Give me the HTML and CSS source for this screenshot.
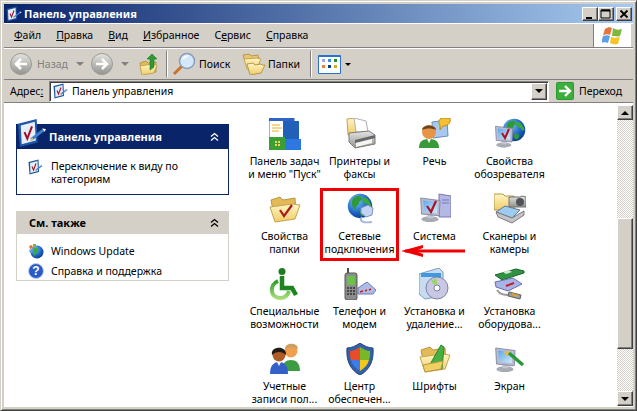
FILE: index.html
```html
<!DOCTYPE html>
<html lang="ru">
<head>
<meta charset="utf-8">
<title>Панель управления</title>
<link rel="stylesheet" href="styles.css">
</head>
<body>
<svg class="defs" width="0" height="0" aria-hidden="true">
  <defs>
    <linearGradient id="gFolder" x1="0" y1="0" x2="0" y2="1"><stop offset="0" stop-color="#fff6c4"/><stop offset="1" stop-color="#f0cc68"/></linearGradient>
    <linearGradient id="gGrey" x1="0" y1="0" x2="0" y2="1"><stop offset="0" stop-color="#e4e4e0"/><stop offset="1" stop-color="#93938f"/></linearGradient>
    <linearGradient id="gScreen" x1="0" y1="0" x2="1" y2="1"><stop offset="0" stop-color="#5aa8ec"/><stop offset="1" stop-color="#d6ecfb"/></linearGradient>
    <linearGradient id="gGreen" x1="0" y1="0" x2="0" y2="1"><stop offset="0" stop-color="#2f9c2c"/><stop offset="1" stop-color="#a4dc74"/></linearGradient>
    <radialGradient id="gGlobe" cx=".35" cy=".3" r=".8"><stop offset="0" stop-color="#7cc4f4"/><stop offset=".6" stop-color="#1c64c4"/><stop offset="1" stop-color="#0a3484"/></radialGradient>
    <symbol id="cp" viewBox="0 0 32 32">
      <polygon points="1,6 21,1 22,26 3,31" fill="#1f57a8"/>
      <polygon points="4,8 19,4 20,24 5,28" fill="#e6eef8"/>
      <path d="M8 15l3 7 5-13" fill="none" stroke="#a11226" stroke-width="2.200"/>
      <path d="M15 23L28 13" stroke="#3f7fd0" stroke-width="3"/>
      <path d="M13 25l3-4 2 2z" fill="#e8c860"/>
      <path d="M27 11l4 1-2 3z" fill="#f0f4fa"/>
    </symbol>
    <symbol id="globe" viewBox="0 0 32 32">
      <circle cx="16" cy="16" r="15" fill="url(#gGlobe)"/>
      <path d="M8 6c4-3 9-3 10 0s-3 3-3 6-4 3-4 7-3 1-4-2-2-8 1-11z" fill="#2f9a3c"/>
      <path d="M21 5c4 1 8 6 9 11-2 2-4 0-5-2s-5-1-6-4 0-4 2-5z" fill="#3aa844"/>
      <path d="M17 21c3-1 6 0 6 3s-3 5-5 4-3-5-1-7z" fill="#2f9a3c"/>
    </symbol>
    <symbol id="folder" viewBox="0 0 32 32">
      <path d="M2 7l9-3 3 3 12-2 1 17-21 6z" fill="#e2bb58" stroke="#b8964a"/>
      <path d="M1 14l23-3 7 1-5 14-20 3z" fill="url(#gFolder)" stroke="#c4a450"/>
    </symbol>
    <symbol id="monitor" viewBox="0 0 32 32">
      <ellipse cx="13" cy="28" rx="10" ry="3.500" fill="#a8aab4"/>
      <path d="M10 22h7v5h-7z" fill="#c4c6d0"/>
      <polygon points="2,3 25,6 24,24 3,22" fill="#b8bcd0" stroke="#7c80a0"/>
      <polygon points="5,6 22,8 21,21 6,19" fill="url(#gScreen)"/>
    </symbol>
  </defs>
</svg>
<div class="window">
  <header class="titlebar">
    <svg class="i16"><use href="#cp"/></svg>
    <span class="title-text">Панель управления</span>
    <div class="caption">
      <button class="capbtn"><svg width="14" height="12"><rect x="3" y="9" width="6" height="2" fill="#000"/></svg></button>
      <button class="capbtn"><svg width="14" height="12"><path d="M2 2h9v8H2z" fill="none" stroke="#000"/><path d="M2 2.500h9" stroke="#000" stroke-width="2"/></svg></button>
      <button class="capbtn close"><svg width="14" height="12"><path d="M3.500 2.500l7 7M10.500 2.500l-7 7" stroke="#000" stroke-width="1.800"/></svg></button>
    </div>
  </header>

  <div class="menubar">
    <nav class="menu">
      <span><u>Ф</u>айл</span><span><u>П</u>равка</span><span><u>В</u>ид</span><span><u>И</u>збранное</span><span>С<u>е</u>рвис</span><span><u>С</u>правка</span>
    </nav>
    <div class="flag">
      <svg width="22" height="20" viewBox="0 0 22 20">
        <path d="M3 3c3-2 5-2 7-1l-2 7C6 8 4 8 1 9z" fill="#e8743c"/>
        <path d="M11 2c3 2 5 2 9 1l-2 7c-3 1-6 0-8 0z" fill="#7cb83c"/>
        <path d="M1 10c3-1 5-1 7 0l-2 7c-2-1-4-1-7 0z" fill="#5ca0e8"/>
        <path d="M9 11c3 1 5 1 9 0l-2 7c-3 1-6 0-8-1z" fill="#f4c428"/>
      </svg>
    </div>
  </div>

  <div class="toolbar">
    <div class="navbtn"><svg width="22" height="22" viewBox="0 0 22 22"><circle cx="11" cy="11" r="10.500" fill="url(#gGrey)" stroke="#9a9a96"/><path d="M17 11H7M11 6l-5 5 5 5" fill="none" stroke="#fff" stroke-width="2.600"/></svg></div>
    <span class="tb-label muted">Назад</span>
    <span class="drop back-drop muted-drop"></span>
    <div class="navbtn"><svg width="22" height="22" viewBox="0 0 22 22"><circle cx="11" cy="11" r="10.500" fill="url(#gGrey)" stroke="#9a9a96"/><path d="M5 11h10M11 6l5 5-5 5" fill="none" stroke="#fff" stroke-width="2.600"/></svg></div>
    <span class="drop fwd-drop muted-drop"></span>
    <svg class="up-icon" width="20" height="22" viewBox="0 0 20 22">
      <path d="M1 10l6-2 2 2 8-1v10L3 21z" fill="#e2bb58" stroke="#b8964a"/>
      <path d="M1 13l12-2 5 1-3 8-12 2z" fill="url(#gFolder)" stroke="#c4a450"/>
      <path d="M11 17V6H8l5-5 5 5h-3v8z" fill="#2c9c30" stroke="#1c7424" stroke-width=".6"/>
    </svg>
    <i class="tb-sep"></i>
    <svg class="search-icon" width="24" height="24" viewBox="0 0 24 24">
      <path d="M2 22l8-8" stroke="#c8742c" stroke-width="3"/>
      <circle cx="15" cy="9" r="7.500" fill="#d4e8fa" stroke="#8a9cb8" stroke-width="1.500"/>
      <path d="M11 7c1-2 3-3 5-3" stroke="#fff" stroke-width="1.500" fill="none"/>
    </svg>
    <span class="tb-label search-label">Поиск</span>
    <svg class="folders-icon" width="24" height="22" viewBox="0 0 24 22">
      <path d="M1 2l6-1 2 2 7-1 1 9-12 3z" fill="#e8c870" stroke="#b8964a"/>
      <path d="M2 6l13-1 4 1-4 9-10 1z" fill="url(#gFolder)" stroke="#c4a450"/>
      <path d="M5 11l6-1 2 2 6-1 1 1 3 0-4 8-11 2z" fill="url(#gFolder)" stroke="#b8964a"/>
    </svg>
    <span class="tb-label folders-label">Папки</span>
    <i class="tb-sep sep2"></i>
    <div class="viewbtn">
      <i class="v1"></i><i class="v2"></i><i class="v3"></i>
      <i class="v4"></i><i class="v5"></i><i class="v6"></i>
    </div>
    <span class="drop view-drop"></span>
  </div>

  <div class="addressbar">
    <span class="addr-label">Адрес<u>:</u></span>
    <div class="addr-input">
      <svg class="i16"><use href="#cp"/></svg>
      <span class="addr-text">Панель управления</span>
      <button class="addr-drop"><span class="drop"></span></button>
    </div>
    <svg class="go-icon" width="18" height="18" viewBox="0 0 18 18">
      <rect width="18" height="18" rx="2" fill="#2c9a30"/>
      <rect x="1" y="1" width="16" height="16" rx="1" fill="#3cae3c"/>
      <path d="M3 9h10M9 4l5 5-5 5" fill="none" stroke="#fff" stroke-width="2.400"/>
    </svg>
    <span class="go-label">Переход</span>
  </div>

  <main class="content">
    <aside class="sidebar">
      <section class="pane primary">
        <svg class="pane-logo"><use href="#cp"/></svg>
        <div class="pane-head">
          <h2>Панель управления</h2>
          <svg class="chev" width="11" height="10" viewBox="0 0 11 10"><path d="M2 4.500l3.500-3 3.500 3M2 8.500l3.500-3 3.500 3" fill="none" stroke="#fff" stroke-width="1.300"/></svg>
        </div>
        <div class="pane-body">
          <a class="task"><svg class="i16"><use href="#cp"/></svg><span>Переключение к виду по категориям</span></a>
        </div>
      </section>
      <section class="pane secondary">
        <div class="pane-head">
          <h2>См. также</h2>
          <svg class="chev" width="11" height="10" viewBox="0 0 11 10"><path d="M2 4.500l3.500-3 3.500 3M2 8.500l3.500-3 3.500 3" fill="none" stroke="#000" stroke-width="1.300"/></svg>
        </div>
        <div class="pane-body">
          <a class="task one"><svg class="i16" viewBox="0 0 16 16"><circle cx="9" cy="9" r="6.500" fill="url(#gGlobe)"/><path d="M6 5c3-1 5 0 4 3s-3 2-3 5c-2-1-3-5-1-8z" fill="#3aa844"/><path d="M1 3l3-1 1 3-3 1z" fill="#e8743c"/><path d="M5 1l3 0 0 3-3 0z" fill="#7cb83c"/><path d="M1 7l3-1 1 3-3 1z" fill="#5ca0e8"/></svg><span>Windows Update</span></a>
          <a class="task one"><svg class="i16" viewBox="0 0 16 16"><circle cx="8" cy="8" r="7.500" fill="#2a5cc8" stroke="#c4d0ec"/><text class="q" x="8" y="12" text-anchor="middle">?</text></svg><span>Справка и поддержка</span></a>
        </div>
      </section>
    </aside>

    <section class="icons">
      <a class="item">
        <svg class="i32" viewBox="0 0 32 32"><rect x="0" y="0" width="25" height="23" fill="#fff" stroke="#2c64b8"/><rect x="0" y="0" width="25" height="3" fill="#2c64c8"/><rect x="14" y="3" width="16" height="20" fill="#2060b8"/><path d="M3 7h8M3 10h10M3 13h7" stroke="#e8b020"/><rect x="0" y="19" width="16" height="13" fill="#3aa034"/><rect x="16" y="21" width="16" height="11" fill="#2c78e0"/><path d="M6 23h2v2H6zM9 23h2v2H9zM6 26h2v2H6zM9 26h2v2H9z" fill="#f4d060"/></svg>
        <span>Панель задач и меню "Пуск"</span>
      </a>
      <a class="item">
        <svg class="i32" viewBox="0 0 32 32"><path d="M3 1l8-1 1 3v14H4z" fill="url(#gFolder)" stroke="#c4a450"/><polygon points="10,0 22,3 24,14 12,14" fill="#fff" stroke="#b0b0b0"/><path d="M5 15l20-2 6 4v9l-20 4-6-6z" fill="url(#gGrey)" stroke="#7c7c78"/><path d="M11 22l20-5v3l-20 5z" fill="#66666a"/><path d="M12 25l16-4v4l-16 4z" fill="#f4f4f0"/></svg>
        <span>Принтеры и факсы</span>
      </a>
      <a class="item">
        <svg class="i32" viewBox="0 0 32 32"><polygon points="13,4 28,2 29,18 14,20" fill="#a8c8f0" stroke="#6c8cc0"/><path d="M22 0h9c1 4-1 8-7 8l-3 4 0-5c-2-2-1-5 1-7z" fill="#f4c030" stroke="#b88c18"/><circle cx="10" cy="14" r="7" fill="#e89448"/><path d="M3 12c0-6 14-6 14 0-4-2-10-2-14 0z" fill="#6c4420"/><path d="M0 30c0-7 4-9 10-9s10 2 10 9z" fill="#389a38"/><path d="M8 21l2 4 2-4z" fill="#fff"/></svg>
        <span>Речь</span>
      </a>
      <a class="item">
        <svg class="i32" viewBox="0 0 32 32"><use href="#globe" x="8" y="0" width="24" height="24"/><use href="#monitor" x="0" y="4" width="24" height="28"/><path d="M8 15l3 5 4-9" fill="none" stroke="#b01020" stroke-width="2"/></svg>
        <span>Свойства обозревателя</span>
      </a>

      <a class="item">
        <svg class="i32" viewBox="0 0 32 32"><use href="#folder"/><path d="M11 17l4 6 8-11" fill="none" stroke="#a81c20" stroke-width="2.200"/></svg>
        <span>Свойства папки</span>
      </a>
      <a class="item">
        <svg class="i32" viewBox="0 0 32 32"><use href="#globe" x="3" y="0" width="26" height="26"/><path d="M17 15l7-3 5 3-1 7-6 2-5-4z" fill="#c4d4f4" stroke="#7c94c8"/><path d="M18 24c-4 5 3 6 10 5" fill="none" stroke="#a8b8e0" stroke-width="2"/></svg>
        <span>Сетевые подключения</span>
      </a>
      <a class="item">
        <svg class="i32" viewBox="0 0 32 32"><polygon points="20,1 32,3 32,24 20,24" fill="#b4b8e4" stroke="#7878b0"/><path d="M23 7h7M23 10h7" stroke="#7078b8"/><use href="#monitor" width="27" height="32"/><path d="M8 13l4 6 5-11" fill="none" stroke="#b01020" stroke-width="2.200"/></svg>
        <span>Система</span>
      </a>
      <a class="item">
        <svg class="i32" viewBox="0 0 32 32"><path d="M0 1h9l2 2h9v14H0z" fill="url(#gFolder)" stroke="#b8964a"/><path d="M15 4h11l2-1 4 1v10H15z" fill="url(#gGrey)" stroke="#707070"/><circle cx="26" cy="9" r="4" fill="#505458"/><polygon points="11,13 26,17 18,25 2,19" fill="#9cccf0" stroke="#6c7488"/><polygon points="2,19 18,25 30,18 30,22 18,30 4,24" fill="#c4c4c8" stroke="#7c7c80"/></svg>
        <span>Сканеры и камеры</span>
      </a>

      <a class="item">
        <svg class="i32" viewBox="0 0 32 32"><circle cx="13" cy="3.500" r="3.500" fill="#1c7c20"/><path d="M13 8v12h10l4 7" fill="none" stroke="#1c8420" stroke-width="4.500"/><path d="M9 13C0 17 1 30 11 30c5 0 8-3 9-7" fill="none" stroke="url(#gGreen)" stroke-width="4"/></svg>
        <span>Специальные возможности</span>
      </a>
      <a class="item">
        <svg class="i32" viewBox="0 0 32 32"><path d="M3 0h2v5H3z" fill="#505050"/><rect x="1" y="5" width="12" height="27" rx="2" fill="#8c8c8c" stroke="#585858"/><rect x="3" y="8" width="8" height="9" fill="#6cc04c"/><path d="M3 20h8M3 23h8M3 26h8" stroke="#303030" stroke-dasharray="2 1" stroke-width="1.500"/><path d="M14 20l9-6 9 8-3 4H14z" fill="#b0bce8" stroke="#6c78b0"/><path d="M16 24l3-1M21 23l2-1M25 22l2-1" stroke="#c02020" stroke-width="1.500"/></svg>
        <span>Телефон и модем</span>
      </a>
      <a class="item">
        <svg class="i32" viewBox="0 0 32 32"><polygon points="0,6 20,0 24,4 24,28 6,31 0,26" fill="#c8dcf0" stroke="#7c9cc0"/><rect x="2" y="5" width="20" height="4" fill="#4098e0"/><circle cx="18" cy="20" r="11" fill="#c8c8e4" stroke="#8080a8"/><path d="M18 20l-6-7a9 9 0 0 1 6-2z" fill="#9cd468"/><circle cx="18" cy="20" r="3" fill="#fff" stroke="#8080a8"/></svg>
        <span>Установка и удаление...</span>
      </a>
      <a class="item">
        <svg class="i32" viewBox="0 0 32 32"><polygon points="1,7 22,1 30,3 30,5 8,12" fill="#2f9440" stroke="#1c6430"/><path d="M9 4l6-2 3 2-6 2z" fill="#d0e8c8"/><path d="M1 14l18-4 9 6-14 7-12-4z" fill="#a8b4e8" stroke="#6870a8"/><path d="M12 18l8-3" stroke="#c02020" stroke-width="2"/><path d="M3 22c3 5 8 5 12 5" fill="none" stroke="#9c9c98" stroke-width="2"/><polygon points="15,24 27,27 26,31 14,28" fill="#9c9c98" stroke="#606060"/><path d="M18 26l6 2" stroke="#e0a030" stroke-width="2"/></svg>
        <span>Установка оборудова...</span>
      </a>

      <a class="item">
        <svg class="i32" viewBox="0 0 32 32"><circle cx="22" cy="8" r="6.500" fill="#f0a050"/><path d="M16 6c0-7 13-7 13 0-4-2-9-2-13 0z" fill="#c8a060"/><path d="M13 28c0-8 4-11 9-11s9 3 9 11z" fill="#3c9c44"/><circle cx="10" cy="12" r="6.500" fill="#b05c28"/><path d="M3 12C1 3 18 2 17 12 13 8 7 8 3 12z" fill="#201c18"/><path d="M1 31c0-9 4-12 9-12s9 3 9 12z" fill="#3460c8"/><path d="M8 19l2 4 2-4z" fill="#fff"/></svg>
        <span>Учетные записи пол...</span>
      </a>
      <a class="item">
        <svg class="i32" viewBox="0 0 32 32"><path d="M16 0C12 3 7 5 3 5c-1 12 3 22 13 27 10-5 14-15 13-27-4 0-9-2-13-5z" fill="#3460a8" stroke="#23407c"/><path d="M16 4c-3 2-7 4-10 4 0 4 0 6 1 9h9z" fill="#e84c28"/><path d="M16 4c3 2 7 4 10 4 0 4 0 6-1 9h-9z" fill="#78b828"/><path d="M7 17h9v11c-5-3-8-7-9-11z" fill="#3c7cf0"/><path d="M25 17h-9v11c5-3 8-7 9-11z" fill="#f4c818"/></svg>
        <span>Центр обеспечен...</span>
      </a>
      <a class="item">
        <svg class="i32" viewBox="0 0 32 32"><use href="#folder"/><path d="M9 25L22 2l3 2-2 22z" fill="#48b040" stroke="#2c8828"/><path d="M4 22l20-4-2 8-16 3z" fill="#f0d060" stroke="#b8964a"/></svg>
        <span>Шрифты</span>
      </a>
      <a class="item">
        <svg class="i32" viewBox="0 0 32 32"><use href="#monitor" width="27" height="32"/><path d="M10 9l5-1 2 3-5 2z" fill="#e8b850"/><path d="M15 10l14 12" stroke="#2c9838" stroke-width="3.500"/></svg>
        <span>Экран</span>
      </a>
    </section>

    <div class="scrollbar">
      <button class="sb-btn"><span class="tri"></span></button>
      <div class="sb-track">
        <div class="sb-thumb"></div>
      </div>
      <button class="sb-btn"><span class="drop"></span></button>
    </div>

    <div class="highlight"></div>
    <svg class="arrow" width="64" height="20" viewBox="0 0 64 20">
      <path d="M4 10h60" stroke="#f00000" stroke-width="3"/>
      <path d="M0 10l22-6v3l-8 3 8 3v3z" fill="#f00000"/>
    </svg>
  </main>
</div>
</body>
</html>
```

FILE: styles.css
```css
* { box-sizing: border-box; }
html, body { margin: 0; padding: 0; width: 637px; height: 411px; overflow: hidden; background: #fff; }
body { font: 10.5px/13px "Noto Sans", "Liberation Sans", sans-serif; color: #000; }
.defs { display: block; height: 0; }
button { padding: 0; margin: 0; font: inherit; }
svg { display: block; flex: none; }
.i16 { width: 16px; height: 16px; }
.i32 { width: 32px; height: 32px; }

.window {
  width: 637px; height: 411px;
  display: flex; flex-direction: column;
  background: #d4d0c8;
  border: 1px solid;
  border-color: #d4d0c8 #404040 #404040 #d4d0c8;
  box-shadow: inset 1px 1px 0 #fff, inset -1px -1px 0 #808080;
  padding: 3px;
}

.titlebar {
  height: 19px; flex: none;
  display: flex; align-items: center;
  padding: 0 1px 0 2px; gap: 2px;
  background: linear-gradient(90deg, #0a246a, #a6caf0);
}
.title-text { color: #fff; font-size: 11px; font-weight: 700; flex: 1; }
.caption { display: flex; }
.capbtn, .addr-drop, .sb-btn {
  background: #d4d0c8;
  border: 1px solid;
  border-color: #fff #404040 #404040 #fff;
  box-shadow: inset -1px -1px 0 #808080;
  display: flex; align-items: center; justify-content: center;
}
.capbtn { width: 16px; height: 14px; }
.capbtn.close { margin-left: 2px; }

.menubar {
  height: 25px; flex: none;
  display: flex;
  border-top: 1px solid #fff;
  border-bottom: 1px solid #808080;
}
.menu { flex: 1; display: flex; align-items: center; padding-left: 10px; gap: 15px; }
.flag {
  width: 38px; background: #fff; border-left: 1px solid #808080;
  display: flex; align-items: center; justify-content: center;
  margin-right: 2px;
}

.toolbar {
  height: 32px; flex: none;
  display: flex; align-items: center;
  padding-left: 6px;
  border-top: 1px solid #fff;
  border-bottom: 1px solid #808080;
}
.tb-label { margin-left: 4px; }
.muted { margin-left: 5px; width: 31px; color: #808080; }
.drop { display: block; width: 0; height: 0; border: 4px solid transparent; border-top-color: #000; border-bottom-width: 0; flex: none; }
.muted-drop { border-top-color: #808080; }
.back-drop { margin-left: 8px; margin-right: 7px; }
.fwd-drop { margin-left: 8px; }
.up-icon { margin-left: 10px; }
.tb-sep { width: 2px; height: 26px; background: #808080; border-right: 1px solid #fff; margin-left: 7px; }
.search-icon { margin-left: 4px; }
.search-label { margin-left: 3px; width: 30px; }
.folders-icon { margin-left: 13px; }
.folders-label { margin-left: 2px; width: 31px; }
.sep2 { margin-left: 11px; }
.viewbtn {
  width: 23px; height: 19px; margin-left: 6px;
  background: #fff; border: 1px solid #2a70d0; border-top-width: 2px; border-radius: 1px;
  display: grid; grid-template-columns: repeat(3, 3px); grid-auto-rows: 3px;
  gap: 3px 3px; padding: 2px 4px; justify-content: center;
}
.viewbtn i { display: block; }
.v1 { background: #a8a4d8; } .v2 { background: #3a90e8; } .v3 { background: #1c9030; }
.v4 { background: #e88038; } .v5 { background: #103c90; } .v6 { background: #d8a828; }
.view-drop { margin-left: 4px; border-width: 3px; border-bottom-width: 0; }

.addressbar {
  height: 23px; flex: none;
  display: flex; align-items: center;
  padding-left: 6px;
  border-bottom: 1px solid #808080;
}
.addr-label { width: 39px; }
.addr-input {
  width: 500px; height: 21px;
  background: #fff;
  border: 1px solid; border-color: #808080 #fff #fff #808080;
  box-shadow: inset 1px 1px 0 #404040;
  display: flex; align-items: center;
  padding-left: 3px;
}
.addr-text { margin-left: 3px; flex: 1; }
.addr-drop { width: 16px; height: 17px; margin-right: 1px; }
.go-icon { margin-left: 7px; }
.go-label { margin-left: 5px; }

.content {
  flex: 1; min-height: 0;
  position: relative;
  display: flex;
  background: #fff;
}
.sidebar { width: 243px; flex: none; padding: 21px 0 0 12px; }
.pane { width: 213px; position: relative; }
.secondary { margin-top: 16px; }
.pane-head { display: flex; align-items: center; justify-content: space-between; padding-right: 9px; }
.pane-head h2 { margin: 0; font-size: 11px; font-weight: 700; }
.primary .pane-head { height: 25px; background: #0a246a; color: #fff; padding-left: 33px; }
.secondary .pane-head { height: 23px; background: #d4d0c8; padding-left: 13px; }
.pane-logo { position: absolute; left: 1px; top: -7px; width: 30px; height: 32px; }
.pane-body { padding: 10px 12px 8px 11px; border: 1px solid #0a246a; border-top: 0; }
.secondary .pane-body { border-color: #d4d0c8; padding-top: 9px; height: 47px; }
.task { display: flex; gap: 7px; }
.task span { flex: 1; margin-top: 1px; }
.task.one { align-items: center; height: 16px; }
.task.one span { margin-top: 0; }
.task.one + .task.one { margin-top: 4px; }
.q { font: 700 12px "Liberation Sans", sans-serif; fill: #fff; }

.icons {
  flex: 1;
  padding-top: 15px;
  display: grid;
  grid-template-columns: repeat(4, 75px);
  grid-auto-rows: 75px;
  align-content: start;
}
.item { display: flex; flex-direction: column; align-items: center; text-align: center; }
.item span { margin-top: 5px; width: 75px; }

.scrollbar { width: 16px; flex: none; display: flex; flex-direction: column; margin: 2px 0 1px; }
.sb-btn { width: 16px; height: 15px; flex: none; }
.tri { display: block; width: 0; height: 0; border: 4px solid transparent; border-bottom-color: #000; border-top-width: 0; }
.sb-track {
  flex: 1;
  padding-top: 98px; padding-bottom: 42px;
  display: flex;
  background: conic-gradient(#d4d0c8 25%, #fff 0 50%, #d4d0c8 0 75%, #fff 0) 0 0 / 2px 2px;
}
.sb-thumb {
  flex: 1;
  background: #d4d0c8;
  border: 1px solid; border-color: #fff #404040 #404040 #fff;
  box-shadow: inset -1px -1px 0 #808080;
}

.highlight {
  position: absolute; left: 316px; top: 85px;
  width: 79px; height: 73px;
  border: 3px solid #f00000;
}
.arrow { position: absolute; left: 397px; top: 138px; }
```
